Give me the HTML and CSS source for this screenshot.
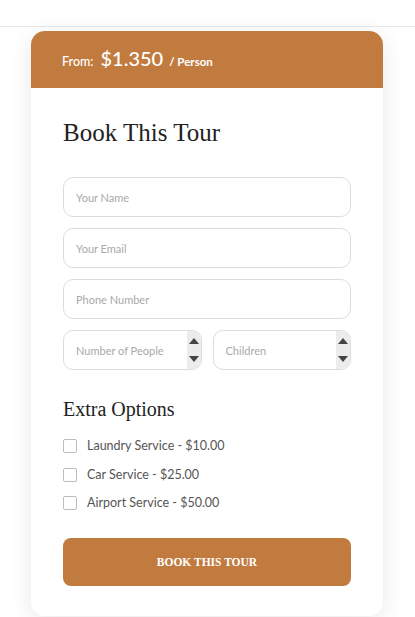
FILE: index.html
```html
<!DOCTYPE html>
<html>
<head>
<meta charset="utf-8">
<link rel="stylesheet" href="styles.css">
</head>
<body>
<div class="topbar"></div>
<div class="card">
  <div class="card-head">
    <span class="from">From:</span>
    <span class="price">$1.350</span>
    <span class="per">/ Person</span>
  </div>
  <div class="card-body">
    <h2 class="title">Book This Tour</h2>
    <form class="form">
      <input class="field" type="text" placeholder="Your Name">
      <input class="field" type="text" placeholder="Your Email">
      <input class="field" type="text" placeholder="Phone Number">
      <div class="pair">
        <div class="numbox">
          <input class="numinput" type="text" placeholder="Number of People">
          <div class="spin"><span class="up"></span><span class="down"></span></div>
        </div>
        <div class="numbox">
          <input class="numinput" type="text" placeholder="Children">
          <div class="spin"><span class="up"></span><span class="down"></span></div>
        </div>
      </div>
    </form>
    <h3 class="subtitle">Extra Options</h3>
    <ul class="options">
      <li class="option"><span class="box"></span>Laundry Service - $10.00</li>
      <li class="option"><span class="box"></span>Car Service - $25.00</li>
      <li class="option"><span class="box"></span>Airport Service - $50.00</li>
    </ul>
    <button class="btn" type="button">BOOK THIS TOUR</button>
  </div>
</div>
</body>
</html>
```
FILE: styles.css
```css
* { box-sizing: border-box; }
html, body { margin: 0; padding: 0; background: #fff; }
body { font-family: "Lato", "Open Sans", sans-serif; width: 415px; height: 617px; overflow: hidden; }

.topbar { height: 27px; border-bottom: 1px solid #e6e8ea; }

.card {
  width: 352px;
  margin: 4px 0 0 31px;
  background: #fff;
  border-radius: 14px;
  overflow: hidden;
  box-shadow: 0 4px 24px rgba(0,0,0,0.09);
}
.card-head {
  height: 57px;
  background: #c27b3f;
  color: #fff;
  display: flex;
  align-items: baseline;
  padding: 15px 31px 0;
  gap: 7px;
}
.from { font-size: 12.5px; font-weight: 500; }
.price { font-size: 20px; font-weight: 500; }
.per { font-size: 11.5px; font-weight: 700; margin-left: -1px; }

.card-body { padding: 30px 32px 30px; }
.title {
  margin: 0 0 29px;
  font-family: "Liberation Serif", "DejaVu Serif", serif;
  font-weight: 400;
  font-size: 25px;
  line-height: 30px;
  color: #222;
}
.form { display: grid; row-gap: 11px; }
.field, .numbox {
  height: 40px;
  border: 1px solid #dcdcdc;
  border-radius: 10px;
  background: #fff;
}
.field, .numinput {
  width: 100%;
  padding: 0 12px;
  font-family: "Lato", sans-serif;
  font-size: 11px;
  color: #555;
  outline: none;
}
.field::placeholder, .numinput::placeholder { color: #a9a9a9; }
.pair { display: grid; grid-template-columns: 1fr 1fr; column-gap: 11px; }
.numbox { display: flex; overflow: hidden; }
.numinput { flex: 1; min-width: 0; border: 0; background: transparent; height: 100%; }
.spin {
  width: 14px;
  background: #ececec;
  display: flex;
  flex-direction: column;
  justify-content: space-between;
  align-items: center;
  padding: 7px 0 7px;
}
.up { width: 0; height: 0; border-left: 5px solid transparent; border-right: 5px solid transparent; border-bottom: 6px solid #444; }
.down { width: 0; height: 0; border-left: 5px solid transparent; border-right: 5px solid transparent; border-top: 6px solid #444; }

.subtitle {
  margin: 27px 0 16px;
  font-family: "Liberation Serif", "DejaVu Serif", serif;
  font-weight: 400;
  font-size: 20px;
  line-height: 24px;
  color: #222;
}
.options { list-style: none; margin: 0; padding: 0; display: grid; row-gap: 10.5px; }
.option {
  display: flex;
  align-items: center;
  gap: 10px;
  font-size: 12.5px;
  line-height: 18px;
  color: #555;
}
.box {
  width: 14px; height: 14px;
  border: 1px solid #bdbdbd;
  border-radius: 2px;
  background: #fff;
}
.btn {
  display: block;
  width: 100%;
  height: 48px;
  margin-top: 26px;
  border: 0;
  border-radius: 8px;
  background: #c27b3f;
  color: #fff;
  font-family: "Liberation Serif", "DejaVu Serif", serif;
  font-size: 11.5px;
  font-weight: 700;
}
```
